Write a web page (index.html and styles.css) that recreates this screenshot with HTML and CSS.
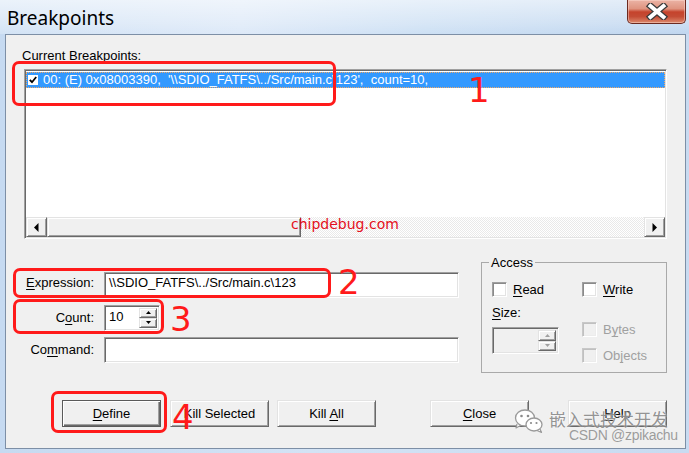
FILE: index.html
```html
<!DOCTYPE html>
<html lang="en">
<head>
<meta charset="utf-8">
<title>Breakpoints</title>
<link rel="stylesheet" href="styles.css">
</head>
<body>
<div class="window">
  <div class="titlebar">
    <span class="title">Breakpoints</span>
    <div class="close-btn">
      <svg width="22" height="17" viewBox="0 0 22 17">
        <path d="M4.5 3 L17.5 14 M17.5 3 L4.5 14" stroke="#3a3a3a" stroke-width="6.4" stroke-linecap="square" fill="none"/>
        <path d="M4.5 3 L17.5 14 M17.5 3 L4.5 14" stroke="#ffffff" stroke-width="4" stroke-linecap="square" fill="none"/>
      </svg>
    </div>
  </div>

  <div class="client">
    <div class="caption">Current <u>B</u>reakpoints:</div>

    <div class="listbox">
      <div class="list-items">
        <div class="item selected">
          <span class="item-check">
            <svg width="8" height="8" viewBox="0 0 8 8"><path d="M0.8 3.8 L3 6.2 L7.2 1" stroke="#000" stroke-width="1.8" fill="none"/></svg>
          </span>
          <span class="item-text">00: (E) 0x08003390,  '\\SDIO_FATFS\../Src/main.c\123',  count=10,</span>
        </div>
      </div>
      <div class="hscroll">
        <div class="sb-btn">
          <svg width="5" height="9" viewBox="0 0 5 9"><polygon points="4.5,0 4.5,9 0,4.5" fill="#000"/></svg>
        </div>
        <div class="sb-thumb"></div>
        <div class="sb-track"></div>
        <div class="sb-btn">
          <svg width="5" height="9" viewBox="0 0 5 9"><polygon points="0.5,0 0.5,9 5,4.5" fill="#000"/></svg>
        </div>
      </div>
    </div>

    <div class="middle">
      <div class="fields">
        <label class="f-label f-label-top"><u>E</u>xpression:</label>
        <div class="edit">\\SDIO_FATFS\../Src/main.c\123</div>

        <label class="f-label">C<u>o</u>unt:</label>
        <div class="edit spin spin-count">
          <span class="spin-value">10</span>
          <span class="spin-btns">
            <span class="spin-btn"><svg width="5" height="3" viewBox="0 0 5 3"><polygon points="0,3 5,3 2.5,0" fill="#000"/></svg></span>
            <span class="spin-btn"><svg width="5" height="3" viewBox="0 0 5 3"><polygon points="0,0 5,0 2.5,3" fill="#000"/></svg></span>
          </span>
        </div>

        <label class="f-label">Co<u>m</u>mand:</label>
        <div class="edit"></div>
      </div>

      <fieldset class="group">
        <legend>Access</legend>
        <div class="gcols">
          <div class="gcol gcol-1">
            <div class="check"><span class="cbox"></span><span class="clabel"><u>R</u>ead</span></div>
            <div class="size-label"><u>S</u>ize:</div>
            <div class="edit spin spin-size disabled">
              <span class="spin-value"></span>
              <span class="spin-btns">
                <span class="spin-btn"><svg width="5" height="3" viewBox="0 0 5 3"><polygon points="0,3 5,3 2.5,0" fill="#a0a0a0"/></svg></span>
                <span class="spin-btn"><svg width="5" height="3" viewBox="0 0 5 3"><polygon points="0,0 5,0 2.5,3" fill="#a0a0a0"/></svg></span>
              </span>
            </div>
          </div>
          <div class="gcol gcol-2">
            <div class="check"><span class="cbox"></span><span class="clabel"><u>W</u>rite</span></div>
            <div class="check check-bytes disabled"><span class="cbox"></span><span class="clabel">B<u>y</u>tes</span></div>
            <div class="check check-objects disabled"><span class="cbox"></span><span class="clabel">Ob<u>j</u>ects</span></div>
          </div>
        </div>
      </fieldset>
    </div>

    <div class="buttons">
      <div class="btn btn-default btn-define"><span><u>D</u>efine</span></div>
      <div class="btn btn-kill-sel"><span>Kill Selected</span></div>
      <div class="btn btn-kill-all"><span>Kill <u>A</u>ll</span></div>
      <div class="btn btn-close"><span><u>C</u>lose</span></div>
      <div class="btn btn-help"><span><u>H</u>elp</span></div>
    </div>
  </div>

  <!-- annotation overlays -->
  <div class="anno-box anno-box-1"></div>
  <div class="anno-box anno-box-2"></div>
  <div class="anno-box anno-box-3"></div>
  <div class="anno-box anno-box-4"></div>
  <div class="anno-num anno-num-1">1</div>
  <div class="anno-num anno-num-2">2</div>
  <div class="anno-num anno-num-3">3</div>
  <div class="anno-num anno-num-4">4</div>
  <div class="site-mark">chipdebug.com</div>

  <div class="wm-icon">
    <svg width="30" height="26" viewBox="0 0 30 26">
      <path d="M3 16 L2 20 L6.5 17.5" fill="#fff" stroke="#9a9a9a" stroke-width="1.2" stroke-linejoin="round"/>
      <ellipse cx="11" cy="10" rx="9.5" ry="8" fill="#fff" stroke="#9a9a9a" stroke-width="1.3"/>
      <circle cx="7.5" cy="8" r="1.3" fill="#8a8a8a"/>
      <circle cx="14" cy="8" r="1.3" fill="#8a8a8a"/>
      <path d="M26 21 L27.5 24.5 L23 22.5" fill="#fff" stroke="#9a9a9a" stroke-width="1.2" stroke-linejoin="round"/>
      <ellipse cx="20" cy="16.5" rx="8" ry="6.5" fill="#fff" stroke="#9a9a9a" stroke-width="1.3"/>
      <circle cx="17" cy="15" r="1.1" fill="#8a8a8a"/>
      <circle cx="22.5" cy="15" r="1.1" fill="#8a8a8a"/>
    </svg>
  </div>
  <div class="wm-text">嵌入式技术开发</div>
  <div class="wm-csdn">CSDN @zpikachu</div>
</div>
</body>
</html>
```

FILE: styles.css
```css
* { box-sizing: border-box; }

html, body {
  margin: 0;
  padding: 0;
}

body {
  width: 689px;
  height: 453px;
  overflow: hidden;
  background: #c9dcf1;
  font-family: "Liberation Sans", Arial, sans-serif;
  font-size: 13px;
  color: #000;
}

u { text-decoration-skip-ink: none; text-underline-offset: 2px; }

.window {
  position: relative;
  width: 689px;
  height: 453px;
  display: flex;
  flex-direction: column;
  background: linear-gradient(to right, #c6daf1 0%, #d3e3f5 45%, #c8dbf1 100%);
}

/* ---------- title bar ---------- */
.titlebar {
  flex: none;
  height: 34px;
  display: flex;
  align-items: flex-start;
  background:
    linear-gradient(to bottom, rgba(255,255,255,.55) 0%, rgba(255,255,255,.2) 70%, rgba(255,255,255,0) 100%),
    linear-gradient(to right, #d3e3f5 0%, #dde9f8 35%, #cde0f4 62%, #c0d6ef 100%);
}

.title {
  margin: 6px 0 0 7px;
  font-family: "Noto Sans", "Open Sans", sans-serif;
  font-size: 19px;
  line-height: 24px;
  color: #000;
}

.close-btn {
  margin-left: auto;
  margin-right: 3px;
  width: 59px;
  height: 24px;
  border: 1px solid #6c2a20;
  border-top: 0;
  border-radius: 0 0 5px 5px;
  background: linear-gradient(to bottom, #ebb3a5 0%, #df9480 38%, #c5432c 52%, #c44c35 72%, #dd8a6d 100%);
  box-shadow: inset 0 0 0 1px rgba(255, 225, 215, .45);
  display: flex;
  align-items: center;
  justify-content: center;
}

/* ---------- client ---------- */
.client {
  flex: 1;
  margin: 0 3px 4px 5px;
  border: 1px solid #7d8fa6;
  background: #f0f0f0;
  display: flex;
  flex-direction: column;
}

.caption {
  margin: 13px 0 0 16px;
  line-height: 15px;
}

/* ---------- list box ---------- */
.listbox {
  margin: 6px 0 0 18px;
  width: 643px;
  height: 170px;
  padding: 1px;
  border: 1px solid;
  border-color: #a0a0a0 #ffffff #ffffff #a0a0a0;
  box-shadow: inset 1px 1px 0 #696969, inset -1px -1px 0 #e3e3e3;
  background: #fff;
  display: flex;
  flex-direction: column;
}

.list-items {
  flex: 1;
  padding-top: 1px;
}

.item {
  height: 16px;
  display: flex;
  align-items: center;
  white-space: pre;
  line-height: 16px;
}

.item.selected {
  background: #3399ff;
  color: #fff;
  outline: 1px dotted #f0a868;
  outline-offset: -1px;
}

.item-check {
  margin-left: 2px;
  width: 10px;
  height: 10px;
  background: #fff;
  display: flex;
  align-items: center;
  justify-content: center;
}

.item-text {
  margin-left: 5px;
}

.hscroll {
  flex: none;
  height: 20px;
  display: flex;
}

.sb-btn,
.sb-thumb,
.btn,
.spin-btn {
  background: #f0f0f0;
  border: 1px solid;
  border-color: #e3e3e3 #696969 #696969 #e3e3e3;
  box-shadow: inset 1px 1px 0 #ffffff, inset -1px -1px 0 #a0a0a0;
}

.sb-btn {
  width: 21px;
  display: flex;
  align-items: center;
  justify-content: center;
}

.sb-thumb {
  width: 254px;
}

.sb-track {
  flex: 1;
  background: repeating-conic-gradient(#ffffff 0 25%, #e9e9e9 0 50%) 0 0 / 2px 2px;
}

/* ---------- middle area ---------- */
.middle {
  display: flex;
  align-items: flex-start;
  margin-top: 15px;
}

.fields {
  margin-top: 18px;
  display: grid;
  grid-template-columns: 88px 355px;
  grid-auto-rows: 26px;
  column-gap: 10px;
  row-gap: 6.5px;
}

.f-label {
  text-align: right;
  line-height: 26px;
  white-space: nowrap;
}

.f-label-top {
  line-height: 22px;
}

.edit {
  height: 26px;
  border: 1px solid;
  border-color: #a0a0a0 #ffffff #ffffff #a0a0a0;
  box-shadow: inset 1px 1px 0 #696969, inset -1px -1px 0 #e3e3e3;
  background: #fff;
  padding: 1px 0 0 4px;
  line-height: 18px;
  white-space: pre;
}

.spin {
  display: flex;
  padding: 2px 2px 2px 4px;
}

.spin-count {
  width: 56px;
}

.spin-value {
  flex: 1;
  line-height: 18px;
  padding-top: 0;
}

.spin-btns {
  width: 18px;
  display: flex;
  flex-direction: column;
}

.spin-btn {
  flex: 1;
  display: flex;
  align-items: center;
  justify-content: center;
}

/* ---------- access group ---------- */
.group {
  margin: 0 0 0 22px;
  width: 186px;
  min-width: 0;
  padding: 0 0 9px 10px;
  border: 1px solid #a9a9a9;
}

.group legend {
  margin-left: -3px;
  padding: 0 2px;
  line-height: 17px;
}

.gcols {
  display: flex;
  padding-top: 11px;
}

.gcol {
  display: flex;
  flex-direction: column;
  align-items: flex-start;
}

.gcol-1 {
  width: 90px;
}

.check {
  height: 15px;
  display: flex;
  align-items: center;
  white-space: nowrap;
}

.cbox {
  width: 15px;
  height: 15px;
  border: 1px solid;
  border-color: #a0a0a0 #ffffff #ffffff #a0a0a0;
  box-shadow: inset 1px 1px 0 #8a8a8a, inset -1px -1px 0 #e3e3e3;
  background: #fff;
}

.clabel {
  margin-left: 6px;
}

.check.disabled .cbox {
  background: #f0f0f0;
  border-color: #c8c8c8 #ffffff #ffffff #c8c8c8;
  box-shadow: inset 1px 1px 0 #c0c0c0, inset -1px -1px 0 #ececec;
}

.check.disabled .clabel {
  color: #a0a0a0;
}

.check-bytes {
  margin-top: 25px;
}

.check-objects {
  margin-top: 11px;
}

.size-label {
  margin-top: 8px;
  line-height: 15px;
}

.spin-size {
  margin-top: 7px;
  width: 67px;
  height: 27px;
}

.spin.disabled {
  background: #f0f0f0;
}

/* ---------- buttons ---------- */
.buttons {
  display: flex;
  margin-top: 27px;
}

.btn {
  width: 99px;
  height: 27px;
  display: flex;
  align-items: center;
  justify-content: center;
  white-space: nowrap;
}

.btn-default {
  border: 1px solid #5a5a5a;
  box-shadow: inset 1px 1px 0 #ffffff, inset -1px -1px 0 #696969, inset -2px -2px 0 #a0a0a0;
}

.btn-define { margin-left: 56px; }
.btn-kill-sel { margin-left: 9px; }
.btn-kill-all { margin-left: 8px; }
.btn-close { margin-left: 54px; }
.btn-help { margin-left: 39px; }

/* ---------- annotations (overlay) ---------- */
.anno-box {
  position: absolute;
  border: 3px solid #ff1a1a;
  border-radius: 7px;
}

.anno-box-1 { left: 12px; top: 61px; width: 324px; height: 45px; }
.anno-box-2 { left: 13px; top: 268px; width: 318px; height: 30px; }
.anno-box-3 { left: 13px; top: 299px; width: 151px; height: 35px; }
.anno-box-4 { left: 51px; top: 391px; width: 116px; height: 42px; }

.anno-num {
  position: absolute;
  font-family: "DejaVu Sans", sans-serif;
  font-size: 34px;
  line-height: 34px;
  color: #ff1a1a;
}

.anno-num-1 { left: 468px; top: 73px; }
.anno-num-2 { left: 338px; top: 265px; }
.anno-num-3 { left: 170px; top: 302px; }
.anno-num-4 { left: 172px; top: 400px; }

.site-mark {
  position: absolute;
  left: 291px;
  top: 217px;
  font-family: "DejaVu Sans", sans-serif;
  font-size: 14px;
  line-height: 14px;
  color: #e4101c;
}

.wm-icon {
  position: absolute;
  left: 514px;
  top: 408px;
  width: 30px;
  height: 26px;
}

.wm-text {
  position: absolute;
  left: 549px;
  top: 410px;
  font-family: "Noto Sans CJK SC", sans-serif;
  font-size: 17px;
  line-height: 17px;
  color: rgba(120, 120, 120, .8);
  text-shadow: 0 0 2px #fff;
}

.wm-csdn {
  position: absolute;
  left: 569px;
  top: 428px;
  font-family: "Liberation Sans", Arial, sans-serif;
  font-size: 14px;
  line-height: 14px;
  letter-spacing: -0.3px;
  color: rgba(140, 140, 140, .85);
}
```
